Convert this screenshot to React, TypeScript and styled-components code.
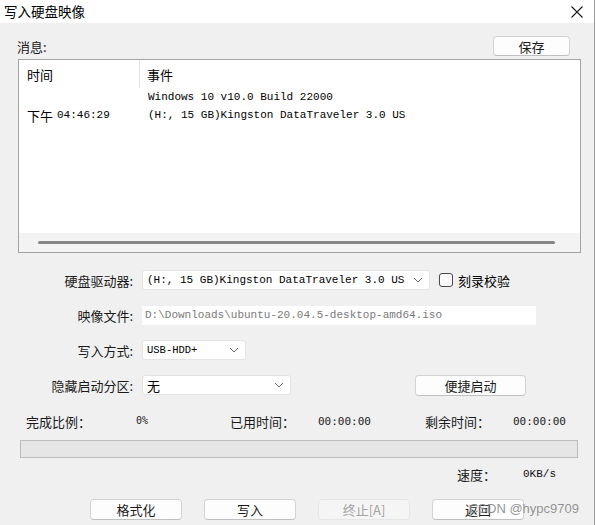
import React from "react";
import styled, { createGlobalStyle } from "styled-components";

const CJK = `"Noto Sans CJK SC", "Microsoft YaHei", sans-serif`;
const MONO = `"Liberation Mono", "Noto Sans CJK SC", monospace`;
const SANSMONO = `"DejaVu Sans Mono", "Noto Sans CJK SC", monospace`;

const Global = createGlobalStyle`
  html, body { margin: 0; padding: 0; background: #fff; }
  body { font-family: ${CJK}; }
  *, *::before, *::after { box-sizing: border-box; }
`;

const Window = styled.div`
  position: relative;
  width: 595px;
  height: 525px;
  background: #f0f0f0;
  border-right: 1px solid #9c9c9c;
  display: flex;
  flex-direction: column;
  overflow: hidden;
  font-family: ${CJK};
  color: #000;
`;

const TitleBar = styled.div`
  height: 23px;
  background: #fff;
  display: flex;
  align-items: center;
  justify-content: space-between;
  padding: 0 11px 0 4px;
  flex-shrink: 0;
`;

const Title = styled.span`
  font-size: 13.5px;
  line-height: 1;
`;

const Body = styled.div`
  display: flex;
  flex-direction: column;
  padding-left: 18px;
`;

const MsgHeader = styled.div`
  margin-top: 13px;
  height: 20px;
  width: 552px;
  display: flex;
  align-items: center;
  justify-content: space-between;
`;

const SmallLabel = styled.span`
  font-size: 13px;
  line-height: 1;
  margin-left: -1px;
  color: #1a1a1a;
`;

const Btn = styled.button<{ $w: number; $h?: number; $disabled?: boolean }>`
  width: ${(p) => p.$w}px;
  height: ${(p) => p.$h ?? 21}px;
  padding: 0;
  border-radius: 4px;
  font-family: ${CJK};
  font-size: 13px;
  line-height: 1;
  background: ${(p) => (p.$disabled ? "#f5f5f5" : "#fdfdfd")};
  color: ${(p) => (p.$disabled ? "#a3a3a3" : "#1b1b1b")};
  border: 1px solid ${(p) => (p.$disabled ? "#e6e6e6" : "#d3d3d3")};
  border-bottom-color: ${(p) => (p.$disabled ? "#e6e6e6" : "#c0c0c0")};
  display: flex;
  align-items: center;
  justify-content: center;
`;

const ListBox = styled.div`
  margin-top: 3px;
  width: 563px;
  height: 194px;
  border: 1px solid #a3a3a3;
  background: #fff;
  display: flex;
  flex-direction: column;
`;

const ListGrid = styled.div`
  display: grid;
  grid-template-columns: 121px 1fr;
  grid-template-rows: 28px;
  grid-auto-rows: 18px;
`;

const HeadCell = styled.div<{ $first?: boolean }>`
  display: flex;
  align-items: center;
  font-size: 13px;
  line-height: 1;
  padding-left: ${(p) => (p.$first ? 8 : 7)}px;
  border-right: ${(p) => (p.$first ? "1px solid #e5e5e5" : "none")};
`;

const Cell = styled.div<{ $first?: boolean }>`
  display: flex;
  align-items: center;
  white-space: pre;
  font-family: ${MONO};
  font-size: 11px;
  line-height: 1;
  padding-left: 8px;
  color: #000;
`;

const CjkPart = styled.span`
  font-family: ${CJK};
  font-size: 13px;
  line-height: 1;
  margin-right: 4px;
`;

const Spacer = styled.div`
  flex: 1;
`;

const HScroll = styled.div`
  height: 19px;
  background: #f3f3f3;
  display: flex;
  align-items: center;
  padding-left: 19px;
`;

const Thumb = styled.div`
  width: 517px;
  height: 3px;
  border-radius: 2px;
  background: #868686;
`;

const Form = styled.div`
  margin-top: 17px;
  display: flex;
  flex-direction: column;
  gap: 15px;
`;

const FormRow = styled.div`
  height: 20px;
  display: flex;
  align-items: center;
`;

const Label = styled.span`
  width: 115px;
  text-align: right;
  font-size: 13px;
  line-height: 1;
  margin-right: 9px;
  color: #1a1a1a;
`;

const Select = styled.div<{ $w: number }>`
  width: ${(p) => p.$w}px;
  height: 20px;
  background: #fff;
  border: 1px solid #e3e3e3;
  border-radius: 3px;
  display: flex;
  align-items: center;
  justify-content: space-between;
  padding: 0 6px 0 4px;
`;

const SelText = styled.span<{ $cjk?: boolean; $size?: number }>`
  font-family: ${(p) => (p.$cjk ? CJK : MONO)};
  font-size: ${(p) => p.$size ?? 11}px;
  white-space: pre;
  color: #000;
  line-height: 1;
`;

const Field = styled.div`
  width: 394px;
  height: 19px;
  background: #fff;
  display: flex;
  align-items: center;
  padding-left: 3px;
  font-family: ${MONO};
  font-size: 11px;
  color: #7a7a7a;
  white-space: pre;
`;

const Check = styled.div`
  margin-left: 9px;
  width: 14px;
  height: 14px;
  border: 1px solid #4a4a4a;
  border-radius: 3px;
  background: #fafafa;
`;

const CheckLabel = styled.span`
  margin-left: 5px;
  font-size: 13px;
  line-height: 1;
`;

const StatsRow = styled.div`
  margin-top: 16px;
  height: 20px;
  padding-left: 8px;
  display: grid;
  grid-template-columns: 110px 94px 88px 107px 88px auto;
  align-items: center;
`;

const StatLabel = styled.span`
  font-size: 13px;
  line-height: 1;
  color: #1a1a1a;
`;

const StatVal = styled.span<{ $size?: number }>`
  font-family: ${SANSMONO};
  font-size: ${(p) => p.$size ?? 11}px;
  line-height: 1;
  color: #222;
`;

const Progress = styled.div`
  margin-top: 9px;
  margin-left: 2px;
  width: 558px;
  height: 18px;
  background: #e6e6e6;
  border: 1px solid #bcbcbc;
`;

const SpeedRow = styled.div`
  margin-top: 6px;
  height: 20px;
  padding-left: 439px;
  display: grid;
  grid-template-columns: 66px auto;
  align-items: center;
`;

const SpeedVal = styled.span`
  font-family: ${MONO};
  font-size: 11px;
  line-height: 1;
  color: #111;
`;

const ButtonRow = styled.div`
  margin-top: 15px;
  padding-left: 72px;
  display: flex;
  gap: 22px;
`;

const Watermark = styled.div`
  position: absolute;
  right: 15px;
  top: 501px;
  font-family: "Liberation Sans", Arial, sans-serif;
  font-size: 13px;
  line-height: 16px;
  color: rgba(110, 110, 110, 0.75);
  text-shadow: 0 0 1px rgba(255, 255, 255, 0.6);
  pointer-events: none;
`;

const Chevron = () => (
  <svg width="10" height="6" viewBox="0 0 10 6">
    <path d="M1 1 L5 5 L9 1" fill="none" stroke="#6a6a6a" strokeWidth="1" />
  </svg>
);

const CloseX = () => (
  <svg width="12" height="12" viewBox="0 0 12 12">
    <path d="M0.5 0.5 L11.5 11.5 M11.5 0.5 L0.5 11.5" stroke="#1a1a1a" strokeWidth="1.1" />
  </svg>
);

export default function App() {
  return (
    <>
      <Global />
      <Window>
        <TitleBar>
          <Title>写入硬盘映像</Title>
          <CloseX />
        </TitleBar>
        <Body>
          <MsgHeader>
            <SmallLabel>消息:</SmallLabel>
            <Btn $w={77} $h={20}>保存</Btn>
          </MsgHeader>
          <ListBox>
            <ListGrid>
              <HeadCell $first>时间</HeadCell>
              <HeadCell>事件</HeadCell>
              <Cell $first />
              <Cell>Windows 10 v10.0 Build 22000</Cell>
              <Cell $first>
                <CjkPart>下午</CjkPart>04:46:29
              </Cell>
              <Cell>(H:, 15 GB)Kingston DataTraveler 3.0 US</Cell>
            </ListGrid>
            <Spacer />
            <HScroll>
              <Thumb />
            </HScroll>
          </ListBox>
          <Form>
            <FormRow>
              <Label>硬盘驱动器:</Label>
              <Select $w={288}>
                <SelText>(H:, 15 GB)Kingston DataTraveler 3.0 US</SelText>
                <Chevron />
              </Select>
              <Check />
              <CheckLabel>刻录校验</CheckLabel>
            </FormRow>
            <FormRow>
              <Label>映像文件:</Label>
              <Field>D:\Downloads\ubuntu-20.04.5-desktop-amd64.iso</Field>
            </FormRow>
            <FormRow>
              <Label>写入方式:</Label>
              <Select $w={104}>
                <SelText $size={10.5}>USB-HDD+</SelText>
                <Chevron />
              </Select>
            </FormRow>
            <FormRow>
              <Label>隐藏启动分区:</Label>
              <Select $w={149}>
                <SelText $cjk $size={13}>无</SelText>
                <Chevron />
              </Select>
              <Btn $w={111} style={{ marginLeft: 124 }}>便捷启动</Btn>
            </FormRow>
          </Form>
          <StatsRow>
            <StatLabel>完成比例：</StatLabel>
            <StatVal $size={10}>0%</StatVal>
            <StatLabel>已用时间：</StatLabel>
            <StatVal>00:00:00</StatVal>
            <StatLabel>剩余时间：</StatLabel>
            <StatVal>00:00:00</StatVal>
          </StatsRow>
          <Progress />
          <SpeedRow>
            <StatLabel>速度：</StatLabel>
            <SpeedVal>0KB/s</SpeedVal>
          </SpeedRow>
          <ButtonRow>
            <Btn $w={92}>格式化</Btn>
            <Btn $w={92}>写入</Btn>
            <Btn $w={92} $disabled>终止[A]</Btn>
            <Btn $w={92}>返回</Btn>
          </ButtonRow>
        </Body>
        <Watermark>CSDN @hypc9709</Watermark>
      </Window>
    </>
  );
}
